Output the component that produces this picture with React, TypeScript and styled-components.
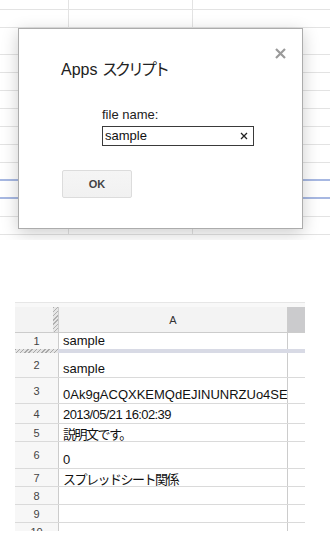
import React from 'react';
import styled, { createGlobalStyle } from 'styled-components';

const GlobalStyle = createGlobalStyle`
  html, body {
    margin: 0;
    padding: 0;
    background: #fff;
  }
  body {
    width: 330px;
    height: 546px;
    overflow: hidden;
    font-family: "Liberation Sans", Arial, "Noto Sans CJK JP", sans-serif;
  }
  * {
    box-sizing: border-box;
  }
`;

interface RowProps {
  h: number;
  line?: string;
}

const Page = styled.div`
  display: flex;
  flex-direction: column;
`;

/* ---------- background sheet behind the dialog ---------- */
const TopArea = styled.div`
  position: relative;
  height: 240px;
  overflow: hidden;
`;

const BgRow = styled.div<RowProps>`
  display: grid;
  grid-template-columns: 69px 124px 1fr;
  height: ${p => p.h}px;
  border-bottom: ${p => p.line ? `2px solid ${p.line}` : '1px solid #e3e3e3'};
`;

const BgCell = styled.div`
  border-right: 1px solid #e3e3e3;
  &:last-child {
    border-right: none;
  }
`;

const Dialog = styled.div`
  position: absolute;
  left: 18px;
  top: 28px;
  width: 285px;
  height: 201px;
  background: #fff;
  border: 1px solid #acacac;
  box-shadow: 0 4px 16px rgba(0, 0, 0, 0.2);
  padding: 31px 0 0 42px;
  display: flex;
  flex-direction: column;
  align-items: flex-start;
`;

const Close = styled.div`
  position: absolute;
  right: 16px;
  top: 19px;
  width: 11px;
  height: 11px;
  line-height: 0;
  cursor: pointer;
`;

const Title = styled.h2`
  margin: 0;
  font-size: 16px;
  line-height: 20px;
  font-weight: 400;
  color: #222;
`;

const Ja = styled.span<{ tight?: number }>`
  font-family: "Noto Sans CJK JP", sans-serif;
  letter-spacing: ${p => p.tight ?? -1.5}px;
  line-height: 1;
`;

const Field = styled.div`
  margin: 27px 0 0 41px;
  display: flex;
  flex-direction: column;
`;

const Label = styled.label`
  font-size: 13px;
  line-height: 16px;
  color: #222;
`;

const InputBox = styled.div`
  margin-top: 3px;
  width: 152px;
  height: 20px;
  border: 1px solid #3a3a3a;
  display: flex;
  align-items: center;
  justify-content: space-between;
  padding: 0 5px 1px 2px;
  font-size: 13px;
  color: #111;
`;

const Clear = styled.span`
  line-height: 0;
  margin-top: 1px;
`;

const OkButton = styled.button`
  margin: 24px 0 0 1px;
  width: 70px;
  height: 28px;
  border: 1px solid #dcdcdc;
  border-radius: 2px;
  background: linear-gradient(#f5f5f5, #f1f1f1);
  font-family: "Liberation Sans", Arial, sans-serif;
  font-size: 11px;
  font-weight: 700;
  color: #444;
  padding: 0;
`;

/* ---------- the spreadsheet ---------- */
const Sheet = styled.div`
  margin: 62px 0 0 15px;
  width: 290px;
  height: 229px;
  overflow: hidden;
`;

const SheetTop = styled.div`
  height: 5px;
  border-top: 1px solid #e6e6e6;
  background: #f8f8f8;
`;

const Grid = styled.div<RowProps>`
  display: grid;
  grid-template-columns: 43px 230px 17px;
  height: ${p => p.h}px;
  border-bottom: 1px solid ${p => p.line ?? '#dadada'};
`;

const Corner = styled.div`
  background:
    repeating-linear-gradient(135deg, #b0b0b0 0 1px, #e6e6e6 1px 3px) right / 5px 100% no-repeat,
    #f3f3f3;
`;

const ColHead = styled.div`
  background: #f3f3f3;
  border-left: 1px solid #ccc;
  border-right: 1px solid #ccc;
  display: flex;
  align-items: center;
  justify-content: center;
  font-size: 11px;
  color: #333;
`;

const Scroll = styled.div`
  background: #cbcbcd;
`;

const RowNum = styled.div`
  background: #f7f7f7;
  display: flex;
  align-items: center;
  justify-content: center;
  font-size: 11px;
  color: #444;
`;

const Cell = styled.div<{ tight?: boolean }>`
  border-left: 1px solid #ccc;
  border-right: 1px solid #ccc;
  display: flex;
  align-items: flex-end;
  padding: 0 0 1px 4px;
  font-size: 13px;
  line-height: 15px;
  color: #111;
  white-space: nowrap;
  overflow-x: clip;
  overflow-y: visible;
  letter-spacing: ${p => p.tight ? '-0.6px' : 'normal'};
`;

const Freeze = styled.div`
  display: grid;
  grid-template-columns: 43px 1fr;
  height: 4px;
`;

const FreezeHatch = styled.div`
  background: repeating-linear-gradient(135deg, #a8a8a8 0 1px, #e4e4e4 1px 3px);
`;

const FreezeBar = styled.div`
  background: #d8dae5;
`;

const bgRows: { h: number; line?: string }[] = [
  { h: 10 }, { h: 18 }, { h: 27 },
  { h: 18 }, { h: 18 }, { h: 18 }, { h: 18 }, { h: 18 }, { h: 18 },
  { h: 18, line: '#a7b8e2' }, { h: 18, line: '#a7b8e2' },
  { h: 18 }, { h: 18 },
];

type SheetRow = { n: number; h: number; text?: string; ja?: boolean; tight?: boolean };

const rows: SheetRow[] = [
  { n: 2, h: 25, text: 'sample' },
  { n: 3, h: 26, text: '0Ak9gACQXKEMQdEJINUNRZUo4SETEk' },
  { n: 4, h: 20, text: '2013/05/21 16:02:39', tight: true },
  { n: 5, h: 18, text: '説明文です。', ja: true },
  { n: 6, h: 27, text: '0' },
  { n: 7, h: 18, text: 'スプレッドシート関係', ja: true },
  { n: 8, h: 18 },
  { n: 9, h: 18 },
  { n: 10, h: 18 },
];

function Dlg() {
  return (
    <Dialog>
      <Close>
        <svg width="11" height="11" viewBox="0 0 11 11">
          <path d="M1 1 L10 10 M10 1 L1 10" stroke="#9a9a9a" strokeWidth="2.2" fill="none" />
        </svg>
      </Close>
      <Title>
        Apps <Ja tight={-3}>スクリプト</Ja>
      </Title>
      <Field>
        <Label>file name:</Label>
        <InputBox>
          <span>sample</span>
          <Clear>
            <svg width="8" height="8" viewBox="0 0 8 8">
              <path d="M1 1 L7 7 M7 1 L1 7" stroke="#222" strokeWidth="1.3" fill="none" />
            </svg>
          </Clear>
        </InputBox>
      </Field>
      <OkButton>OK</OkButton>
    </Dialog>
  );
}

export default function App() {
  return (
    <Page>
      <GlobalStyle />
      <TopArea>
        {bgRows.map((r, i) => (
          <BgRow key={i} h={r.h} line={r.line}>
            <BgCell />
            <BgCell />
            <BgCell />
          </BgRow>
        ))}
        <Dlg />
      </TopArea>

      <Sheet>
        <SheetTop />
        <Grid h={26} line="#ccc">
          <Corner />
          <ColHead>A</ColHead>
          <Scroll />
        </Grid>
        <Grid h={16} line="transparent">
          <RowNum>1</RowNum>
          <Cell>sample</Cell>
          <div />
        </Grid>
        <Freeze>
          <FreezeHatch />
          <FreezeBar />
        </Freeze>
        {rows.map(r => (
          <Grid key={r.n} h={r.h}>
            <RowNum>{r.n}</RowNum>
            <Cell tight={r.tight}>
              {r.ja ? <Ja>{r.text}</Ja> : r.text}
            </Cell>
            <div />
          </Grid>
        ))}
      </Sheet>
    </Page>
  );
}
